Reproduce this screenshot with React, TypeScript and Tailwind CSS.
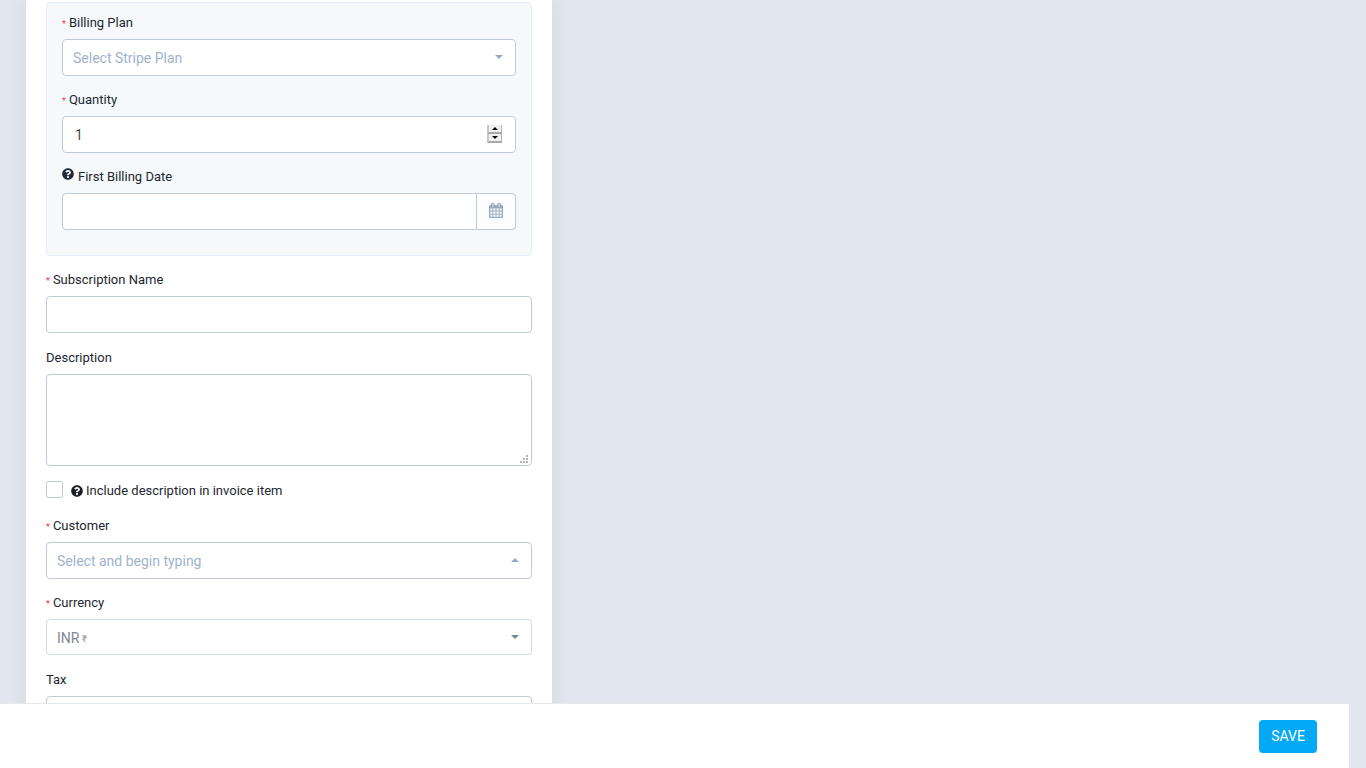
import { useState, type ReactNode } from "react";
import { FaQuestionCircle } from "react-icons/fa";

const control =
  "block w-full h-[37px] rounded-[4px] border border-[#bfcbd9] bg-white text-[14px] leading-5 text-[#494949] outline-none focus:border-[#03a9f4]";

function Label({ htmlFor, required, help, children }: { htmlFor: string; required?: boolean; help?: boolean; children: ReactNode }) {
  return (
    <label htmlFor={htmlFor} className="mb-[6px] flex h-5 items-center text-[13px] leading-5 text-[#23272e]">
      {required && <span className="mr-[3px] pt-0.5 text-[9px] leading-5 text-[#fc2d42]">*</span>}
      {help && <FaQuestionCircle className="mr-1 mb-1.5 size-3 text-[#1e293b]" />}
      {children}
    </label>
  );
}

function Caret({ up, className }: { up?: boolean; className: string }) {
  return (
    <svg viewBox="0 0 8 4" className={"pointer-events-none absolute right-[13px] top-4 h-1 w-2 " + className} aria-hidden="true">
      <path d={up ? "M0 4h8L4 0z" : "M0 0h8L4 4z"} fill="currentColor" />
    </svg>
  );
}

function SelectField({ id, label, required, placeholder, up }: { id: string; label: string; required?: boolean; placeholder: string; up?: boolean }) {
  return (
    <div className="mb-[14px]">
      <Label htmlFor={id} required={required}>{label}</Label>
      <div className="relative">
        <select id={id} className={control + " appearance-none px-2.5 text-[#a0b3cb]"}>
          <option>{placeholder}</option>
        </select>
        <Caret up={up} className="text-[#97a8cb]" />
      </div>
    </div>
  );
}

function CalendarIcon() {
  return (
    <svg viewBox="0 0 1664 1792" className="h-[15px] w-[14px]" fill="currentColor" stroke="currentColor" strokeWidth="40" aria-hidden="true">
      <path d="M128 1664h288v-288h-288v288zM480 1664h320v-288h-320v288zM128 1312h288v-320h-288v320zM480 1312h320v-320h-320v320zM128 928h288v-288h-288v288zM864 1664h320v-288h-320v288zM480 928h320v-288h-320v288zM1248 1664h288v-288h-288v288zM864 1312h320v-320h-320v320zM512 448v-288q0-13-9.5-22.5t-22.5-9.5h-64q-13 0-22.5 9.5t-9.5 22.5v288q0 13 9.5 22.5t22.5 9.5h64q13 0 22.5-9.5t9.5-22.5zM1248 1312h288v-320h-288v320zM864 928h320v-288h-320v288zM1248 928h288v-288h-288v288zM1280 448v-288q0-13-9.5-22.5t-22.5-9.5h-64q-13 0-22.5 9.5t-9.5 22.5v288q0 13 9.5 22.5t22.5 9.5h64q13 0 22.5-9.5t9.5-22.5zM1664 384v1280q0 52-38 90t-90 38h-1408q-52 0-90-38t-38-90v-1280q0-52 38-90t90-38h128v-96q0-66 47-113t113-47h64q66 0 113 47t47 113v96h384v-96q0-66 47-113t113-47h64q66 0 113 47t47 113v96h128q52 0 90 38t38 90z" />
    </svg>
  );
}

function QuantityField() {
  const [quantity, setQuantity] = useState(1);
  const step =
    "flex h-[9px] w-full items-center justify-center border-b-2 border-l-2 border-r border-b-[#a8a8a8] border-l-[#c8c8c8] border-r-[#b4b4b4] bg-[#f0f0f0] text-black";
  return (
    <div className="mb-[14px]">
      <Label htmlFor="quantity" required>Quantity</Label>
      <div className="relative">
        <input
          id="quantity"
          type="number"
          min={1}
          value={quantity}
          onChange={(e) => setQuantity(Number(e.target.value))}
          className={control + " px-3 [appearance:textfield] [&::-webkit-inner-spin-button]:appearance-none"}
        />
        <div className="absolute right-[14px] top-[9px] w-[15px]">
          <button type="button" aria-label="Increase quantity" className={step} onClick={() => setQuantity(quantity + 1)}>
            <svg viewBox="0 0 6 3" className="h-[3px] w-[6px]"><path d="M0 3h6L3 0z" /></svg>
          </button>
          <button type="button" aria-label="Decrease quantity" className={step} onClick={() => setQuantity(Math.max(1, quantity - 1))}>
            <svg viewBox="0 0 6 3" className="h-[3px] w-[6px]"><path d="M0 0h6L3 3z" /></svg>
          </button>
        </div>
      </div>
    </div>
  );
}

export default function App() {
  return (
    <div className="flex h-screen flex-col overflow-hidden bg-[#e2e6ee] font-['Roboto',sans-serif]">
      <main className="min-h-0 flex-1 overflow-y-auto px-[26px] [scrollbar-width:none]">
        <form id="subscription" className="w-full max-w-[526px] bg-white px-5 pt-0.5 pb-5 shadow-[0_1px_15px_1px_rgba(90,90,90,0.1)]" onSubmit={(e) => e.preventDefault()}>
          <section className="mb-[14px] rounded-[4px] border border-[#e4eef8] bg-[#f5f9fc] px-[15px] pt-[10px] pb-[11px]">
            <SelectField id="plan" label="Billing Plan" required placeholder="Select Stripe Plan" />
            <QuantityField />
            <div className="mb-[14px]">
              <Label htmlFor="first-date" help>First Billing Date</Label>
              <div className="flex">
                <input id="first-date" type="text" className={control + " min-w-0 flex-1 rounded-r-none px-3"} />
                <button type="button" aria-label="Choose date" className="flex w-[39px] shrink-0 items-center justify-center rounded-r-[4px] border border-l-0 border-[#bfcbd9] bg-[#fbfdff] pb-0.5 text-[#97a8be]">
                  <CalendarIcon />
                </button>
              </div>
            </div>
          </section>

          <div className="mb-[15px]">
            <Label htmlFor="name" required>Subscription Name</Label>
            <input id="name" type="text" className={control + " px-3"} />
          </div>

          <div className="mb-[15px]">
            <Label htmlFor="description">Description</Label>
            <div className="relative">
              <textarea id="description" className="block h-[92px] w-full resize-none rounded-[4px] border border-[#bfcbd9] bg-white px-3 py-2 text-[14px] leading-5 text-[#494949] outline-none focus:border-[#03a9f4]" />
              <svg viewBox="0 0 8 8" className="pointer-events-none absolute right-1 bottom-[3px] size-2" fill="#b4b4b4" shapeRendering="crispEdges" aria-hidden="true">
                <path d="M6 0h2v2h-2zM6 3h2v2h-2zM6 6h2v2h-2zM3 3h2v2h-2zM3 6h2v2h-2zM0 6h2v2h-2z" />
              </svg>
            </div>
          </div>

          <div className="mb-[15px] flex h-5 items-start">
            <input id="include" type="checkbox" className="mr-2 size-[17px] shrink-0 appearance-none rounded-[2px] border border-[#bfcbd9] bg-white checked:bg-[#03a9f4]" />
            <label htmlFor="include" className="flex items-center text-[13px] leading-5 text-[#23272e]">
              <FaQuestionCircle className="mr-[3px] size-3 text-[#1b1f24]" />
              Include description in invoice item
            </label>
          </div>

          <SelectField id="customer" label="Customer" required placeholder="Select and begin typing" up />

          <div className="mb-[15px]">
            <Label htmlFor="currency" required>Currency</Label>
            <div className="relative">
              <select id="currency" disabled className="block h-9 w-full appearance-none rounded-[4px] border border-[#d2dbe6] bg-white px-2.5 pt-0.5 text-[14px] leading-5 text-[#808894] opacity-100">
                <option>INR</option>
              </select>
              <small className="pointer-events-none absolute left-9 top-2.5 text-[9px] leading-5 text-[#808894]">₹</small>
              <Caret className="text-[#7d8794]" />
            </div>
          </div>

          <SelectField id="tax" label="Tax" placeholder="No Tax" />
        </form>
      </main>
      <footer className="mr-[17px] flex shrink-0 justify-end border-t border-[#e6e8ea] bg-white pt-4 pr-8 pb-[15px]">
        <button type="submit" form="subscription" className="h-[33px] rounded-[4px] bg-[#03a9f4] px-3 pb-0.5 text-[14px] leading-5 text-white">SAVE</button>
      </footer>
    </div>
  );
}
